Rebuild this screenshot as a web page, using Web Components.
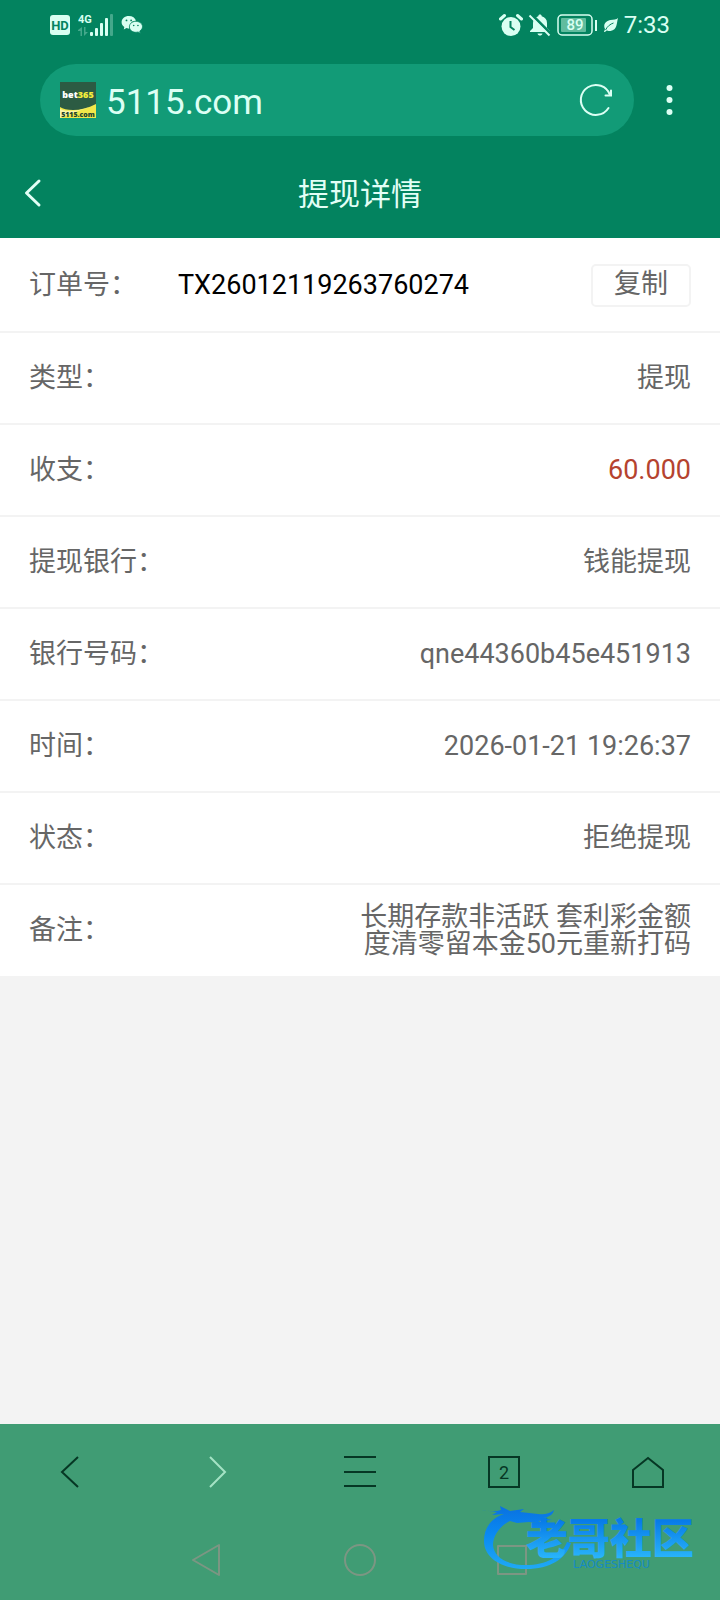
<!DOCTYPE html>
<html lang="zh-CN">
<head>
<meta charset="utf-8">
<meta name="viewport" content="width=device-width, initial-scale=1">
<title>提现详情</title>
<style>
  body { margin: 0; font-family: Roboto, "Noto Sans CJK SC", sans-serif; }
</style>
</head>
<body>
<withdraw-app></withdraw-app>

<script>
const define = (name, html) => customElements.define(name, class extends HTMLElement {
  constructor() {
    super();
    const t = document.createElement('template');
    t.innerHTML = html;
    this.attachShadow({ mode: 'open' }).append(t.content.cloneNode(true));
  }
});

define('status-bar', `
<style>
  :host { display: flex; align-items: center; justify-content: space-between; height: 50px; padding: 0 50px; color: #d9fff2; }
  div { display: flex; align-items: center; }
  svg { display: block; }
  .left { gap: 8px; }
  .right { gap: 5px; }
  time { font-size: 24px; line-height: 28px; font-weight: 400; }
  text { font-family: Roboto, sans-serif; }
</style>
<div class="left">
  <svg width="20" height="22" viewBox="0 0 20 22"><rect y="1" width="20" height="20" rx="3" fill="currentColor"/><text x="10" y="16" text-anchor="middle" font-size="13" font-weight="700" fill="#03835f">HD</text></svg>
  <svg width="35" height="24" viewBox="0 0 35 24" fill="currentColor"><text x="0" y="10" font-size="11" font-weight="700">4G</text>
    <g opacity=".3"><path d="M0 17l4-3v9H2.500v-5H0zM6 14h1.500v5H10l-4 4z"/><rect x="32" y="1" width="3" height="22" rx="1"/></g>
    <rect x="12" y="19" width="3" height="4" rx="1"/><rect x="17" y="15" width="3" height="8" rx="1"/><rect x="22" y="10" width="3" height="13" rx="1"/><rect x="27" y="5" width="3" height="18" rx="1"/></svg>
  <svg width="23" height="20" viewBox="0 0 24 22"><path fill="currentColor" d="M8 1C3.500 1 0 4 0 8c0 2.300 1.200 4 3 5.300L2.400 16l3-1.600 3 .6C8 10 12 6 16 6.500 15 3 12 1 8 1z"/><path fill="currentColor" stroke="#03835f" stroke-width=".8" d="M15.600 7c-3.800 0-7 2.500-7 6s3.200 6 7 6c.9 0 1.700-.1 2.500-.4l2.500 1.500-.6-2.500c1.800-1.100 3-2.700 3-4.600 0-3.500-3.400-6-7.400-6z"/><g fill="#03835f"><circle cx="5.400" cy="6" r="1"/><circle cx="10.500" cy="6" r="1"/><circle cx="13.300" cy="11.500" r=".9"/><circle cx="18" cy="11.500" r=".9"/></g></svg>
</div>
<div class="right">
  <svg width="24" height="24" viewBox="0 0 24 24"><circle cx="12" cy="13.500" r="9.500" fill="currentColor"/><path d="M1.500 6l4-3.500M18.500 2.500l4 3.500" stroke="currentColor" stroke-width="3" stroke-linecap="round"/><path d="M11.500 8v6l4 3" fill="none" stroke="#03835f" stroke-width="2"/></svg>
  <svg width="24" height="24" viewBox="0 0 24 24"><path fill="currentColor" d="M12 1.500c1 0 1.700.7 1.700 1.700C17 4 19 6.500 19 10v5l3 3v1H2v-1l3-3v-5c0-3.500 2-6 5.300-6.800 0-1 .7-1.700 1.700-1.700zM9.500 20.500h5c-.4 1.400-1.300 2-2.500 2s-2.100-.6-2.500-2z"/><path d="M3.500 1.500l19 19" stroke="#03835f" stroke-width="3"/><path d="M1.500 2.500l20 20" stroke="currentColor" stroke-width="2"/></svg>
  <svg width="41" height="22" viewBox="0 0 41 22"><rect x="1" y="1" width="34" height="20" rx="4" fill="none" stroke="currentColor" stroke-width="1.500"/><rect x="4" y="4" width="25" height="14" rx="1" fill="#61bc9e"/><rect x="38" y="6" width="2" height="11" fill="currentColor"/><text x="18" y="16" text-anchor="middle" font-size="15" font-weight="500" fill="currentColor">89</text></svg>
  <svg width="16" height="16" viewBox="0 0 15 16"><path fill="currentColor" d="M14.500 1C13 6 14 13 7 14c-1.500.2-3.500-.2-4-.5L1.500 15H.5l1-3C-1 7 3 3.500 7 3c3-.4 6-.5 7.500-2z"/><path d="M2 13c2-4 5-6 8-7" stroke="#03835f" fill="none"/></svg>
  <time>7:33</time>
</div>`);

define('address-bar', `
<style>
  :host { display: flex; align-items: center; height: 72px; padding: 14px 29px 16px 40px; gap: 14px; color: #dcfff4; }
  form { display: flex; flex: 1; align-items: center; min-width: 0; box-sizing: border-box; height: 72px; padding: 0 20px; gap: 10px; border-radius: 36px; background: #129b77; }
  input { flex: 1; min-width: 0; height: 52px; padding: 4px 0 0; box-sizing: border-box; border: 0; outline: 0; background: none; font: 35px/48px Roboto, sans-serif; color: inherit; }
  button { display: block; padding: 0; border: 0; background: none; color: inherit; }
  svg { display: block; }
</style>
<form>
  <svg width="36" height="36" viewBox="0 0 36 36" font-family="Open Sans, sans-serif" font-weight="800"><rect width="36" height="36" fill="#f0e84a"/><path d="M0 0h36v22c-8 4-16 6-23 6-6 0-10-1-13-3z" fill="#2c5b43"/><path d="M0 27c9 4 22 1 36-4L18 29 0 36z" fill="#fffbd0" opacity=".7"/><text x="18" y="16" text-anchor="middle" font-size="9" fill="#fff">bet<tspan fill="#f4ec3c">365</tspan></text><text x="18" y="35" text-anchor="middle" font-size="7" fill="#24452f">5115.com</text></svg>
  <input aria-label="网址" value="5115.com">
  <button type="button" aria-label="刷新"><svg width="36" height="36" viewBox="0 0 36 36" fill="none" stroke="currentColor" stroke-width="2" stroke-linecap="round"><path d="M30.500 26A15 15 0 1 1 32 13"/><path d="M33 8.500V13.500h-5.500"/></svg></button>
</form>
<button type="button" aria-label="更多"><svg width="43" height="36" viewBox="0 0 43 36" fill="currentColor"><circle cx="21.500" cy="6" r="3"/><circle cx="21.500" cy="18" r="3"/><circle cx="21.500" cy="30" r="3"/></svg></button>`);

define('page-title', `
<style>
  :host { display: grid; grid-template-columns: 48px 1fr 48px; align-items: center; height: 86px; padding: 0 12px; color: #e2fff6; }
  h1 { margin: 0; text-align: center; font-size: 31px; line-height: 40px; font-weight: 400; }
  a { display: block; color: inherit; }
  svg { display: block; }
</style>
<a href="#" aria-label="返回"><svg width="42" height="42" viewBox="0 0 42 42" fill="none" stroke="currentColor" stroke-width="3" stroke-linecap="round" stroke-linejoin="round"><path d="M27 7L14.500 19 27 31"/></svg></a>
<h1><slot></slot></h1>`);

define('detail-row', `
<style>
  :host { display: flex; align-items: center; justify-content: space-between; box-sizing: border-box; min-height: 92px; padding: 0 29px; border-bottom: 2px solid #f3f3f3; background: #fff; color: #666; font-size: 27px; line-height: 27px; }
  :host([first]) { min-height: 95px; padding-top: 2px; }
  :host([last]) { min-height: 91px; border-bottom: 0; }
  .label { flex: none; min-width: 149px; }
  .value { max-width: 332px; text-align: right; }
  :host([first]) .value { flex: 1; max-width: none; text-align: left; color: #000; }
  :host([negative]) .value { color: #b5432f; }
</style>
<span class="label"><slot name="label"></slot></span>
<span class="value"><slot></slot></span>
<slot name="action"></slot>`);

define('copy-button', `
<style>
  :host { display: block; }
  button { display: block; width: 100px; height: 43px; padding: 0 0 2px; border: 2px solid #f3f3f3; border-radius: 5px; background: #fff; color: #666; font: inherit; line-height: 37px; }
</style>
<button type="button"><slot></slot></button>`);

define('browser-toolbar', `
<style>
  :host { display: grid; grid-template-columns: repeat(5, 1fr); height: 96px; color: #063724; }
  button { display: grid; place-items: center; padding: 0; border: 0; background: none; color: inherit; }
  button:disabled { color: #a5e3c5; }
  svg { display: block; fill: none; stroke: currentColor; stroke-width: 2; }
</style>
<button type="button" aria-label="后退"><svg width="36" height="36" viewBox="0 0 36 36"><path d="M24 3L8 18l16 15"/></svg></button>
<button type="button" aria-label="前进" disabled><svg width="36" height="36" viewBox="0 0 36 36"><path d="M12 3l15 15-15 15"/></svg></button>
<button type="button" aria-label="菜单"><svg width="36" height="36" viewBox="0 0 36 36"><path d="M2 3h32M2 18h32M2 32h32"/></svg></button>
<button type="button" aria-label="标签页"><svg width="36" height="36" viewBox="0 0 36 36"><rect x="3" y="3" width="30" height="30"/><text x="18" y="25" text-anchor="middle" font-family="Roboto, sans-serif" font-size="18" fill="currentColor" stroke="none">2</text></svg></button>
<button type="button" aria-label="主页"><svg width="36" height="36" viewBox="0 0 36 36"><path d="M3 16L18 4l15 12v17H3z"/></svg></button>`);

define('system-nav', `
<style>
  :host { display: flex; justify-content: center; height: 80px; }
  button { display: grid; place-items: center; width: 154px; padding: 0; border: 0; background: none; color: #7c9683; }
  svg { display: block; fill: none; stroke: currentColor; stroke-width: 2; stroke-linejoin: round; }
</style>
<button type="button" aria-label="返回"><svg width="36" height="36" viewBox="0 0 36 36"><path d="M31 3v30L5 18z"/></svg></button>
<button type="button" aria-label="主屏幕"><svg width="36" height="36" viewBox="0 0 36 36"><circle cx="18" cy="18" r="15"/></svg></button>
<button type="button" aria-label="最近任务"><svg width="36" height="36" viewBox="0 0 36 36"><rect x="2" y="4" width="28" height="28"/></svg></button>`);

define('community-mark', `
<style>
  :host { display: block; width: 224px; height: 72px; pointer-events: none; }
  svg { display: block; }
</style>
<svg width="224" height="72" viewBox="0 0 224 72">
  <defs><linearGradient id="g" x1="0" y1="0" x2="0" y2="72" gradientUnits="userSpaceOnUse"><stop stop-color="#0a70df"/><stop offset=".4" stop-color="#0989f2"/><stop offset="1" stop-color="#25b1f5"/></linearGradient>
  <linearGradient id="t" x1="0" y1="16" x2="0" y2="52" gradientUnits="userSpaceOnUse"><stop stop-color="#087be8"/><stop offset="1" stop-color="#28b3fa"/></linearGradient></defs>
  <path fill="url(#g)" d="M1 5c7 1 14 2 20 0L20 1l10 5 14-2-4 3 18 2c6 1 11 0 16-4-1 5-5 7-11 8l9 2-14 1 8 3-17-2-12 1-7-2C21 20 13 30 13 40c1 13 15 20 33 20 20 0 35-8 41-23l4 1C86 54 70 64 46 64 22 64 4 53 4 36 4 22 12 13 24 9L12 10l5-3z"/>
  <text x="46" y="49" font-family="Noto Sans CJK SC, sans-serif" font-size="42" font-weight="900" fill="url(#t)">老哥社区</text>
  <text x="93" y="63" font-family="DejaVu Sans, sans-serif" font-size="11" font-weight="400" fill="#168bc4">LAOGESHEQU</text>
</svg>`);

define('withdraw-app', `
<style>
  :host { display: flex; flex-direction: column; min-height: 100vh; background: #f3f3f3; }
  header { background: #03835f; }
  main { flex: 1; }
  footer { position: relative; background: #409c74; }
  community-mark { position: absolute; right: 16px; bottom: 23px; }
</style>
<header>
  <status-bar></status-bar>
  <address-bar></address-bar>
  <page-title>提现详情</page-title>
</header>
<main>
  <detail-row first><span slot="label">订单号：</span>TX26012119263760274<copy-button slot="action">复制</copy-button></detail-row>
  <detail-row><span slot="label">类型：</span>提现</detail-row>
  <detail-row negative><span slot="label">收支：</span>60.000</detail-row>
  <detail-row><span slot="label">提现银行：</span>钱能提现</detail-row>
  <detail-row><span slot="label">银行号码：</span>qne44360b45e451913</detail-row>
  <detail-row><span slot="label">时间：</span>2026-01-21 19:26:37</detail-row>
  <detail-row><span slot="label">状态：</span>拒绝提现</detail-row>
  <detail-row last><span slot="label">备注：</span>长期存款非活跃 套利彩金额度清零留本金50元重新打码</detail-row>
</main>
<footer>
  <browser-toolbar></browser-toolbar>
  <system-nav></system-nav>
  <community-mark></community-mark>
</footer>`);
</script>
</body>
</html>
